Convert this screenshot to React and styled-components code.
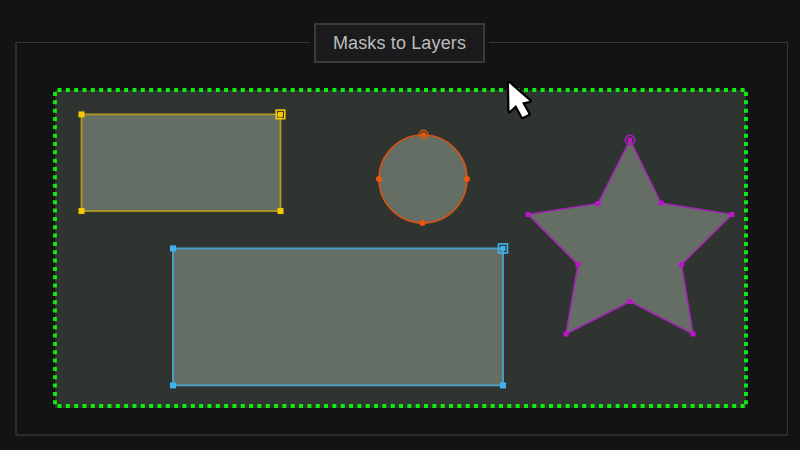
import React from "react";
import styled, { createGlobalStyle } from "styled-components";

const GlobalStyle = createGlobalStyle`
  html, body {
    margin: 0;
    background: #131315;
  }
`;

const YELLOW = { line: "#b09a24", dot: "#f4c800" };
const ORANGE = { line: "#cf5518", dot: "#ea580c" };
const BLUE = { line: "#48a4d0", dot: "#40b2f2" };
const PURPLE = { line: "#a424b4", dot: "#bc14cc" };

const starPoints = [
  [630, 140],
  [661, 203],
  [732, 214.5],
  [681.5, 264.5],
  [693, 334],
  [630, 301.5],
  [566, 334],
  [578, 264.5],
  [528, 214.5],
  [598, 203.5],
];

const selectionSides = [
  [57.5, 90, 746, 90],
  [57.5, 406, 746, 406],
  [55, 92, 55, 406],
  [746, 92, 746, 406],
];

const SquareHandle = ({ x, y, tone, size = 6 }) => (
  <HandleDot x={x - size / 2} y={y - size / 2} width={size} height={size} $tone={tone} />
);

// corner the mask was started from, square with a ring round it
const RingedSquare = ({ x, y, tone, ring }) => (
  <>
    <HandleRing x={x - ring / 2} y={y - ring / 2} width={ring} height={ring} $tone={tone} />
    <SquareHandle x={x} y={y} tone={tone} size={5} />
  </>
);

const RectMask = ({ x, y, width, height, tone, ring }) => (
  <>
    <MaskRect x={x} y={y} width={width} height={height} $tone={tone} />
    <SquareHandle x={x} y={y} tone={tone} />
    <SquareHandle x={x} y={y + height} tone={tone} />
    <SquareHandle x={x + width} y={y + height} tone={tone} />
    <RingedSquare x={x + width} y={y} tone={tone} ring={ring} />
  </>
);

const App = () => (
  <Page>
    <GlobalStyle />
    <Frame>
      <Title>Masks to Layers</Title>
      <Selection>
        <Drawing viewBox="55 90 691 318" width="691" height="318">
          {selectionSides.map(([x1, y1, x2, y2]) => (
            <SelectionLine key={`${x1}-${y1}-${x2}`} x1={x1} y1={y1} x2={x2} y2={y2} />
          ))}

          <RectMask x={81.5} y={114.4} width={199} height={96.6} tone={YELLOW} ring={8.6} />
          <RectMask x={173} y={248.4} width={330} height={137} tone={BLUE} ring={9} />

          <MaskCircle cx={423} cy={179} r={44} $tone={ORANGE} />
          <CircleRing cx={423.5} cy={134.5} r={4.2} $tone={ORANGE} />
          <RoundHandle cx={423.5} cy={134.5} r={2.6} $tone={ORANGE} />
          <RoundHandle cx={467} cy={179} r={3} $tone={ORANGE} />
          <RoundHandle cx={422.5} cy={223} r={3} $tone={ORANGE} />
          <RoundHandle cx={379} cy={179} r={3} $tone={ORANGE} />

          <MaskStar points={starPoints.map((p) => p.join(",")).join(" ")} $tone={PURPLE} />
          <CircleRing cx={630} cy={140} r={4.8} $tone={PURPLE} />
          {starPoints.map(([x, y]) => (
            <SquareHandle key={`${x}-${y}`} x={x} y={y} tone={PURPLE} size={5} />
          ))}

          <Pointer d="M509 83 L529.5 101 L522 102.5 L528.5 114 L522.5 117 L516 105 L509.5 111 Z" />
        </Drawing>
      </Selection>
    </Frame>
  </Page>
);

const Page = styled.div`
  box-sizing: border-box;
  display: flex;
  width: 800px;
  height: 450px;
  padding: 42px 12px 14px 15px;
  background: #131315;
  overflow: hidden;
`;

const Frame = styled.div`
  position: relative;
  box-sizing: border-box;
  flex: 1;
  padding: 47px 41px 26px 38px;
  border: 1px solid #363638;
  border-left: 2px solid #2c2c2e;
  border-bottom: 2px solid #2c2c2e;
`;

const Title = styled.h1`
  position: absolute;
  top: -20px;
  left: 297px;
  box-sizing: border-box;
  width: 171px;
  height: 40px;
  margin: 0;
  border: 2px solid #3a3a3c;
  background: #1b1b1d;
  box-shadow: 0 0 0 4px #131315;
  color: #bcbcbc;
  font-family: "Liberation Sans", Arial, sans-serif;
  font-size: 18px;
  font-weight: 400;
  letter-spacing: 0.14px;
  line-height: 36px;
  text-align: center;
`;

const Selection = styled.div`
  width: 691px;
  height: 318px;
  background: #2f3431;
`;

const Drawing = styled.svg`
  display: block;
  overflow: visible;
`;

const SelectionLine = styled.line`
  stroke: #10ee10;
  stroke-width: 3.8;
  stroke-dasharray: 4 4.33;
`;

const MaskRect = styled.rect`
  fill: #656e64;
  stroke: ${(p) => p.$tone.line};
  stroke-width: 1.8;
`;

const MaskCircle = styled.circle`
  fill: #656e64;
  stroke: ${(p) => p.$tone.line};
  stroke-width: 1.6;
`;

const MaskStar = styled.polygon`
  fill: #656e64;
  stroke: ${(p) => p.$tone.line};
  stroke-width: 1.6;
  stroke-linejoin: round;
`;

const HandleDot = styled.rect`
  fill: ${(p) => p.$tone.dot};
`;

const HandleRing = styled.rect`
  fill: none;
  stroke: ${(p) => p.$tone.dot};
  stroke-width: 1.6;
`;

const RoundHandle = styled.circle`
  fill: ${(p) => p.$tone.dot};
`;

const CircleRing = styled.circle`
  fill: none;
  stroke: ${(p) => p.$tone.line};
  stroke-width: 1.5;
`;

const Pointer = styled.path`
  fill: #ffffff;
  stroke: #000000;
  stroke-width: 4.5;
  stroke-linejoin: round;
  paint-order: stroke;
`;

export default App;
